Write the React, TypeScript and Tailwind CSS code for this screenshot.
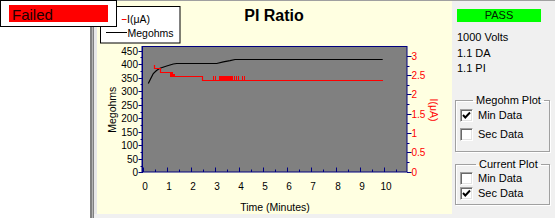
import React from "react";

const X = (t: number) => 142.7 + t * 24.1;
const YL = (v: number) => 172.3 - v * (121.6 / 450);
const YR = (v: number) => 171.7 - v * 38.6;

const NAVY = "#000080";

function Chart() {
  const leftTicks: React.ReactNode[] = [];
  for (let v = 0; v <= 450; v += 25) {
    const y = Math.round(YL(v)) + 0.5;
    const major = v % 50 === 0;
    leftTicks.push(
      <line key={"lt" + v} x1={major ? 138.5 : 140.5} x2={143} y1={y} y2={y} stroke={NAVY} strokeWidth={1} />
    );
    if (major)
      leftTicks.push(
        <text key={"ll" + v} x={138} y={y + 3.6} textAnchor="end" fontSize={10} fill="#000">
          {v}
        </text>
      );
  }
  const rightTicks: React.ReactNode[] = [];
  for (let i = 0; i <= 12; i++) {
    const v = i * 0.25;
    const y = Math.round(YR(v)) + 0.5;
    const major = i % 2 === 0;
    rightTicks.push(
      <line key={"rt" + i} x1={407} x2={major ? 411.5 : 409.5} y1={y} y2={y} stroke={NAVY} strokeWidth={1} />
    );
    if (major)
      rightTicks.push(
        <text key={"rl" + i} x={411.5} y={y + 3.6} fontSize={10} fill="#ff0000">
          {String(v)}
        </text>
      );
  }
  const xTicks: React.ReactNode[] = [];
  for (let i = 0; i <= 21; i++) {
    const t = i * 0.5;
    const x = Math.round(X(t)) + 0.5;
    const major = i % 2 === 0;
    xTicks.push(
      <line key={"xt" + i} x1={x} x2={x} y1={major ? 167.5 : 169.5} y2={172} stroke={NAVY} strokeWidth={1} />
    );
    if (major && t <= 10)
      xTicks.push(
        <text key={"xl" + i} x={x + 1.5} y={189.5} textAnchor="middle" fontSize={10} fill="#000">
          {String(t)}
        </text>
      );
  }

  const spikes = [
    213.5, 215.5, 219.5, 220.5, 221.5, 222.5, 223.5, 224.5, 225.5, 226.5, 227.5, 228.5, 229.5, 230.5,
    231.5, 232.5, 234.5, 236.5, 238.5, 242.5, 244.5,
  ];

  return (
    <svg
      width={355}
      height={213}
      viewBox="97 1 355 213"
      className="block"
      style={{ fontFamily: "'Liberation Sans', Arial, sans-serif" }}
    >
      {/* title */}
      <text x={274} y={20.7} textAnchor="middle" fontSize={16} fontWeight="bold" fill="#000">
        PI Ratio
      </text>

      {/* plot area */}
      <rect x={142.5} y={46.5} width={264.5} height={125.5} fill="#808080" stroke={NAVY} strokeWidth={1} />
      <line x1={142} y1={46} x2={142} y2={172.5} stroke={NAVY} strokeWidth={1} />
      {leftTicks}
      {rightTicks}
      {xTicks}

      {/* megohm curve */}
      <polyline
        fill="none"
        stroke="#000"
        strokeWidth={1.2}
        points="148.3,83.5 150.5,79 153.3,73.5 156.5,70.5 160,68.3 166.7,66 173.3,64 176.7,63.5 216.7,63.5 223.3,61.8 230,60.7 235,59.5 382.7,59.5"
      />

      {/* current curve */}
      <path
        d="M154.5 65 V68.5 H160.5 V72.5 H171 V76.5 H202.5 V80.5 H383"
        fill="none"
        stroke="#ff0000"
        strokeWidth={1.2}
      />
      <rect x={170} y={72} width={3} height={5} fill="#ff0000" />
      <rect x={172.5} y={74} width={2.5} height={3} fill="#ff0000" />
      <line x1={200} y1={76.5} x2={203} y2={76.5} stroke="#ff0000" strokeWidth={1} />
      <line x1={219} y1={76.5} x2={233} y2={76.5} stroke="#ff0000" strokeWidth={1} />
      {spikes.map((x) => (
        <line key={x} x1={x} x2={x} y1={76} y2={80.5} stroke="#ff0000" strokeWidth={1} />
      ))}

      {/* axis titles */}
      <text
        x={111.7}
        y={113.5}
        textAnchor="middle"
        fontSize={10.5}
        fill="#000"
        transform="rotate(-90 111.7 109.7)"
      >
        Megohms
      </text>
      <text
        x={434}
        y={113.8}
        textAnchor="middle"
        fontSize={10.5}
        fill="#ff0000"
        transform="rotate(90 434 110)"
      >
        I(μA)
      </text>
      <text x={275} y={210.7} textAnchor="middle" fontSize={10.5} fill="#000">
        Time (Minutes)
      </text>

      {/* legend */}
      <rect x={100.5} y={6.5} width={79.5} height={36.5} fill="#fff" stroke="#000" strokeWidth={1} />
      <line x1={121.7} x2={126.5} y1={19.5} y2={19.5} stroke="#ff0000" strokeWidth={1} />
      <text x={127} y={23} fontSize={10.5} fill="#000">
        I(μA)
      </text>
      <line x1={106} x2={127} y1={32.5} y2={32.5} stroke="#000" strokeWidth={1} />
      <text x={127.5} y={36.6} fontSize={10.5} fill="#000">
        Megohms
      </text>
    </svg>
  );
}

function CheckBox({ checked, label }: { checked: boolean; label: string }) {
  return (
    <div className="flex items-center h-[13px] gap-[5px]">
      <div className="w-[13px] h-[13px] bg-white border border-[#a0a0a0] border-b-white border-r-white shadow-[inset_1px_1px_0_#696969,inset_-1px_-1px_0_#e3e3e3] flex items-center justify-center">
        {checked && (
          <svg width="9" height="9" viewBox="0 0 9 9">
            <polyline points="1,4 3.3,6.5 8,1.5" fill="none" stroke="#000" strokeWidth="1.9" />
          </svg>
        )}
      </div>
      <span className="text-[11px] leading-[13px] text-black">{label}</span>
    </div>
  );
}

export default function App() {
  return (
    <div className="relative flex w-[555px] h-[218px] bg-white overflow-hidden font-['Liberation_Sans',Arial,sans-serif]">
      <div className="w-[90px] shrink-0 bg-white" />
      <div className="flex shrink-0">
        <div className="w-[2px] bg-[#808080]" />
        <div className="w-[1px] bg-[#b4b4b4]" />
        <div className="w-[1px] bg-[#808080]" />
      </div>
      <div className="flex flex-1 border-t border-[#a0a0a0] bg-[#f0f0f0]">
        <div className="w-[3px] shrink-0 bg-[#e8e8e8] h-[213px]" />
        <div className="w-[355px] h-[213px] shrink-0 bg-[#ffffe1]">
          <Chart />
        </div>
        <div className="flex-1 flex flex-col text-[11px] text-black">
          <div className="ml-[5px] mt-[8px] w-[84px] h-[13px] bg-[#00ff00] text-center leading-[13px] text-[#002000]">
            PASS
          </div>
          <div className="ml-[5px] mt-[8px] leading-[15.5px]">
            <div>1000 Volts</div>
            <div>1.1 DA</div>
            <div>1.1 PI</div>
          </div>
          <fieldset className="ml-[3px] mt-[17px] w-[95px] h-[58px] border border-[#a0a0a0] shadow-[inset_1px_1px_0_#fff,1px_1px_0_#fff] pl-[4px] pt-[2px]">
            <legend className="ml-[13px] px-[3px] leading-[13px]">Megohm Plot</legend>
            <div className="flex flex-col gap-[6px]">
              <CheckBox checked label="Min Data" />
              <CheckBox checked={false} label="Sec Data" />
            </div>
          </fieldset>
          <fieldset className="ml-[3px] mt-[6px] w-[95px] h-[47px] border border-[#a0a0a0] shadow-[inset_1px_1px_0_#fff,1px_1px_0_#fff] pl-[4px] pt-[1px]">
            <legend className="ml-[16px] px-[3px] leading-[13px]">Current Plot</legend>
            <div className="flex flex-col gap-[2px]">
              <CheckBox checked={false} label="Min Data" />
              <CheckBox checked label="Sec Data" />
            </div>
          </fieldset>
        </div>
      </div>

      {/* Failed popup overlay */}
      <div className="absolute left-0 top-0 w-[117px] h-[27px] bg-white border border-black">
        <div className="ml-[8px] mt-[4px] w-[99px] h-[17px] bg-[#ff0000] pl-[3px] pt-[2px] text-[15px] leading-[15px] text-[#200000]">
          Failed
        </div>
      </div>
    </div>
  );
}
